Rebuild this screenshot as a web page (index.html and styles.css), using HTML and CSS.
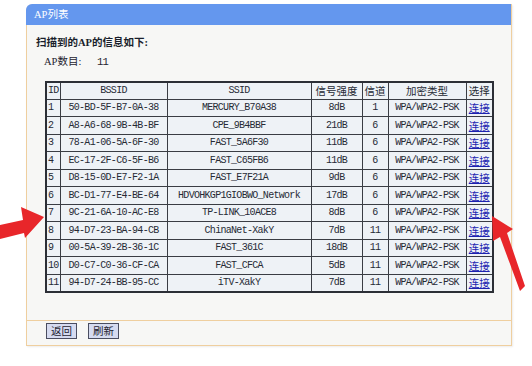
FILE: index.html
```html
<!DOCTYPE html>
<html lang="zh-CN">
<head>
    <meta charset="UTF-8">
    <title>AP列表</title>
    <link rel="stylesheet" href="styles.css">
</head>
<body>

    <div class="panel">
        <div class="panel-head">AP列表</div>

        <div class="panel-body">
            <div class="intro">扫描到的AP的信息如下:</div>
            <div class="count"><span class="count-label">AP数目:</span><span class="mono">11</span></div>

            <table class="ap-table">
                <colgroup>
                    <col class="c-id"><col class="c-bssid"><col class="c-ssid"><col class="c-rssi">
                    <col class="c-ch"><col class="c-enc"><col class="c-sel">
                </colgroup>
                <tr class="head">
                    <td class="mono left">ID</td>
                    <td class="mono">BSSID</td>
                    <td class="mono">SSID</td>
                    <td>信号强度</td>
                    <td>信道</td>
                    <td>加密类型</td>
                    <td>选择</td>
                </tr>
                <tr><td class="left">1</td><td>50-BD-5F-B7-0A-38</td><td>MERCURY_B70A38</td><td>8dB</td><td>1</td><td>WPA/WPA2-PSK</td><td><a href="#">连接</a></td></tr>
                <tr><td class="left">2</td><td>A8-A6-68-9B-4B-BF</td><td>CPE_9B4BBF</td><td>21dB</td><td>6</td><td>WPA/WPA2-PSK</td><td><a href="#">连接</a></td></tr>
                <tr><td class="left">3</td><td>78-A1-06-5A-6F-30</td><td>FAST_5A6F30</td><td>11dB</td><td>6</td><td>WPA/WPA2-PSK</td><td><a href="#">连接</a></td></tr>
                <tr><td class="left">4</td><td>EC-17-2F-C6-5F-B6</td><td>FAST_C65FB6</td><td>11dB</td><td>6</td><td>WPA/WPA2-PSK</td><td><a href="#">连接</a></td></tr>
                <tr><td class="left">5</td><td>D8-15-0D-E7-F2-1A</td><td>FAST_E7F21A</td><td>9dB</td><td>6</td><td>WPA/WPA2-PSK</td><td><a href="#">连接</a></td></tr>
                <tr><td class="left">6</td><td>BC-D1-77-E4-BE-64</td><td>HDVOHKGP1GIOBWO_Network</td><td>17dB</td><td>6</td><td>WPA/WPA2-PSK</td><td><a href="#">连接</a></td></tr>
                <tr><td class="left">7</td><td>9C-21-6A-10-AC-E8</td><td>TP-LINK_10ACE8</td><td>8dB</td><td>6</td><td>WPA/WPA2-PSK</td><td><a href="#">连接</a></td></tr>
                <tr><td class="left">8</td><td>94-D7-23-BA-94-CB</td><td>ChinaNet-XakY</td><td>7dB</td><td>11</td><td>WPA/WPA2-PSK</td><td><a href="#">连接</a></td></tr>
                <tr><td class="left">9</td><td>00-5A-39-2B-36-1C</td><td>FAST_361C</td><td>18dB</td><td>11</td><td>WPA/WPA2-PSK</td><td><a href="#">连接</a></td></tr>
                <tr><td class="left">10</td><td>D0-C7-C0-36-CF-CA</td><td>FAST_CFCA</td><td>5dB</td><td>11</td><td>WPA/WPA2-PSK</td><td><a href="#">连接</a></td></tr>
                <tr><td class="left">11</td><td>94-D7-24-BB-95-CC</td><td>iTV-XakY</td><td>7dB</td><td>11</td><td>WPA/WPA2-PSK</td><td><a href="#">连接</a></td></tr>
            </table>
        </div>

        <div class="panel-foot">
            <button class="btn">返回</button>
            <button class="btn">刷新</button>
        </div>
    </div>

    <!-- red pointer arrows drawn over the screenshot -->
    <svg class="arrows" width="532" height="366" viewBox="0 0 532 366">
        <polygon fill="#e8262a" points="0,225 23,220 21,207 44,217 25,238 24,233 0,239"/>
        <polygon fill="#e8262a" points="492,216 513,229 507,233 525,286 520,291 500,237 493,241"/>
    </svg>

</body>
</html>
```

FILE: styles.css
```css
body {
    margin: 0;
    width: 532px;
    height: 366px;
    overflow: hidden;
    background: #ffffff;
    font-family: "Liberation Serif", "Noto Sans CJK SC", serif;
    font-size: 10.5px;
    color: #1f2430;
    position: relative;
}

.mono {
    font-family: "Liberation Mono", "Noto Sans CJK SC", monospace;
    letter-spacing: -0.7px;
}

.panel {
    margin: 4px 0 0 26px;
    width: 484px;
    border: 1px solid #efcf9f;
    border-top: none;
    border-radius: 7px 0 0 0;
    background: #f7f7f5;
    box-shadow: 1px 1px 2px rgba(0,0,0,0.08);
}

.panel-head {
    height: 21px;
    line-height: 21px;
    padding-left: 8px;
    background: #6497ee;
    color: #ffffff;
    border-radius: 6px 0 0 0;
    margin-left: -1px;
    font-size: 10.5px;
}

.panel-body {
    padding: 10px 0 27px 9px;
}

.intro {
    font-weight: bold;
    line-height: 16px;
    color: #1a1f2c;
}

.count {
    margin: 3px 0 0 8px;
    line-height: 16px;
}

.count-label {
    display: inline-block;
    width: 53px;
}

.ap-table {
    margin: 11px 0 0 9px;
    border-collapse: collapse;
    border: 2px solid #2c2f36;
    table-layout: fixed;
    width: 447px;
    background: #eef2f6;
}

.c-id { width: 14px; }
.c-bssid { width: 107px; }
.c-ssid { width: 144px; }
.c-rssi { width: 51px; }
.c-ch { width: 26px; }
.c-enc { width: 78px; }
.c-sel { width: 27px; }

.ap-table td {
    border: 1px solid #3a3d44;
    height: 16.5px;
    padding: 0;
    text-align: center;
    white-space: nowrap;
    overflow: hidden;
    font-family: "Liberation Mono", "Noto Sans CJK SC", monospace;
    letter-spacing: -0.7px;
    font-size: 10px;
    color: #262a35;
}

.ap-table tr.head td {
    height: 15.5px;
    font-family: "Liberation Serif", "Noto Sans CJK SC", serif;
    letter-spacing: 0;
    font-size: 10.5px;
}

.ap-table tr.head td.mono {
    font-family: "Liberation Mono", monospace;
    letter-spacing: -0.7px;
    font-size: 10px;
}

.ap-table td.left {
    text-align: left;
    padding-left: 1px;
}

.ap-table a {
    color: #1c22b0;
    text-decoration: underline;
    font-family: "Noto Sans CJK SC", sans-serif;
    letter-spacing: 0;
    font-size: 10.5px;
}

.panel-foot {
    border-top: 1px solid #efcf9f;
    height: 22px;
    padding: 2px 0 0 19px;
    display: flex;
    gap: 11px;
    align-items: flex-start;
}

.btn {
    margin: 0;
    padding: 0 3px;
    height: 16px;
    line-height: 14px;
    border: 1px solid #4a4d60;
    background: #d6dbf0;
    color: #1f2430;
    font-family: "Noto Sans CJK SC", sans-serif;
    font-size: 10.5px;
    width: 31px;
}

.arrows {
    position: absolute;
    left: 0;
    top: 0;
    pointer-events: none;
}
```
